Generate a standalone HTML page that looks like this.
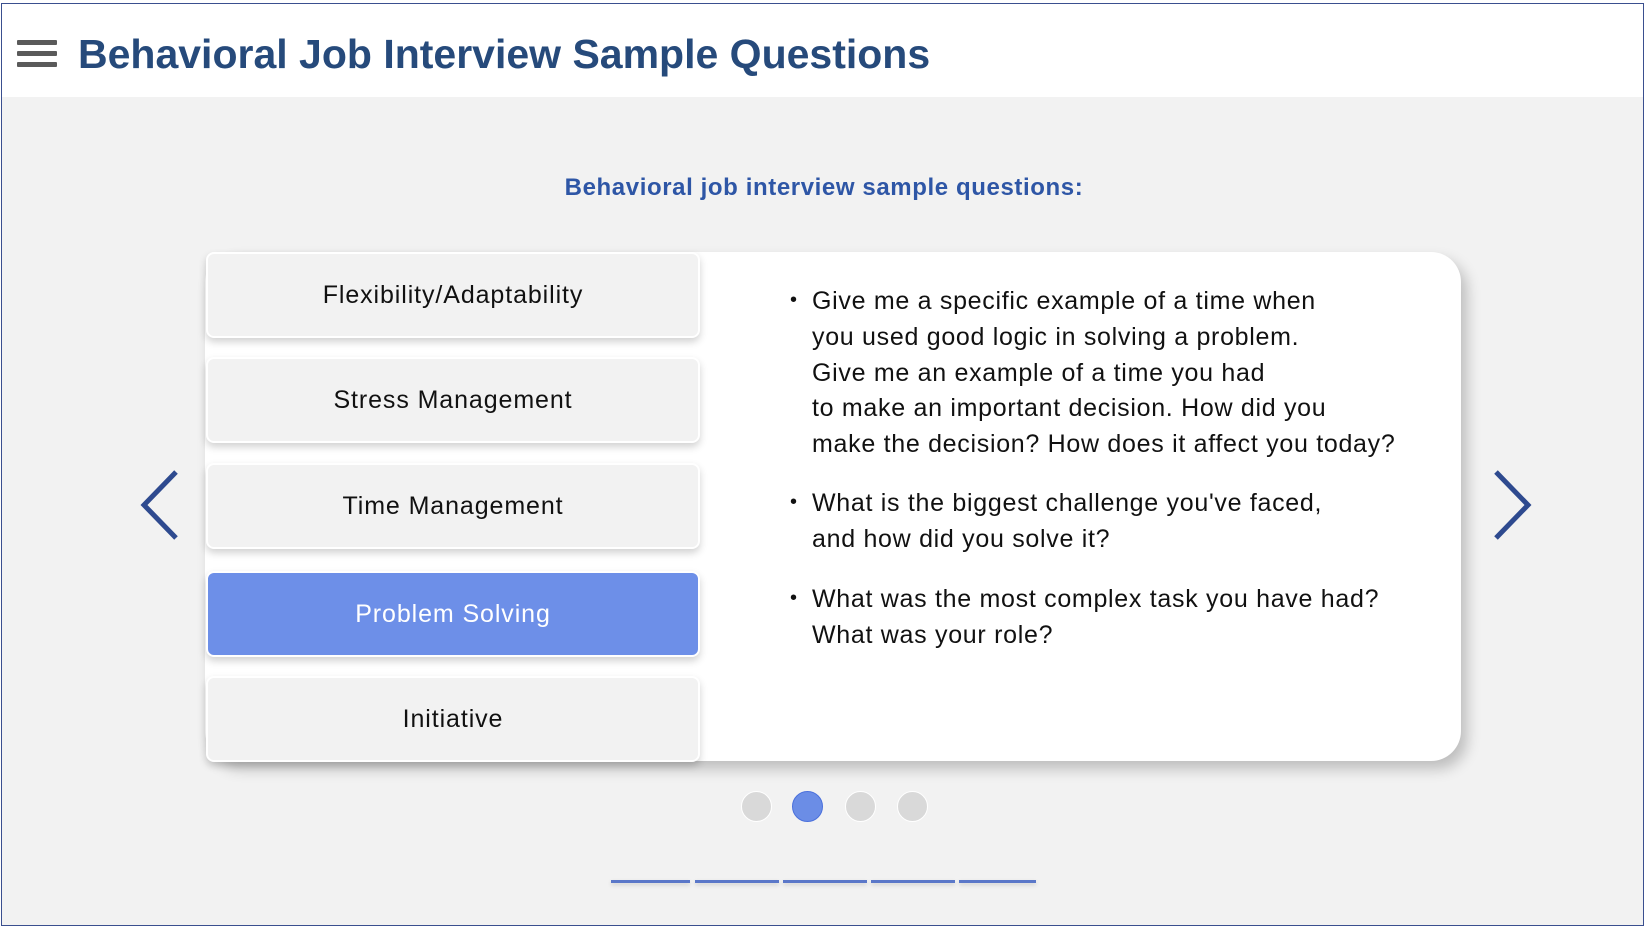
<!DOCTYPE html>
<html><head><meta charset="utf-8"><style>
*{margin:0;padding:0;box-sizing:border-box}
body{width:1648px;height:931px;background:#fff;position:relative;overflow:hidden;font-family:"Liberation Sans",sans-serif}
.frame{position:absolute;left:1px;top:3px;width:1643px;height:923px;border:1.5px solid #3a4f8f;background:#f2f2f2}
.header{position:absolute;left:0;top:0;right:0;height:93px;background:#fff}
.bar{position:absolute;left:15px;width:40px;height:5px;background:#5a5a5a;border-radius:1px}
.title{position:absolute;left:76px;top:27px;font-weight:bold;font-size:41px;letter-spacing:0;color:#264a7b;white-space:nowrap}
.sub{position:absolute;left:0;width:1648px;top:174px;text-align:center;font-weight:bold;font-size:24px;letter-spacing:0.6px;color:#2e56a6}
.card{position:absolute;left:205px;top:252px;width:1256px;height:509px;background:#fff;border-radius:30px;box-shadow:6px 8px 14px rgba(0,0,0,.22)}
.tab{position:absolute;left:206px;width:494px;height:86px;background:#f2f2f2;border:2px solid #fff;border-radius:8px;box-shadow:0 4px 8px rgba(0,0,0,.18);display:flex;align-items:center;justify-content:center;font-size:25px;letter-spacing:0.9px;color:#111}
.tab.on{background:#6d8fe8;color:#fff}
.txt{position:absolute;left:812px;font-size:25px;letter-spacing:0.7px;color:#111;line-height:35.8px;white-space:nowrap}
.bul{position:absolute;left:790px;font-size:20px;color:#111}
.dot{position:absolute;top:791px;width:31px;height:31px;border-radius:50%;background:#d9d9d9;border:1.5px solid #fff}
.seg{position:absolute;top:880px;height:3px;background:#5b78c9;box-shadow:0 2px 4px rgba(0,0,0,.15)}
</style></head><body>
<div class="frame">
<div class="header">
<div class="bar" style="top:36px"></div><div class="bar" style="top:47px"></div><div class="bar" style="top:58px"></div>
<div class="title">Behavioral Job Interview Sample Questions</div>
</div>
</div>
<div class="sub">Behavioral job interview sample questions:</div>
<div class="card"></div>
<div class="tab" style="top:252px">Flexibility/Adaptability</div>
<div class="tab" style="top:357px">Stress Management</div>
<div class="tab" style="top:463px">Time Management</div>
<div class="tab on" style="top:571px">Problem Solving</div>
<div class="tab" style="top:676px">Initiative</div>
<div class="bul" style="top:289px">•</div>
<div class="txt" style="top:284px">Give me a specific example of a time when<br>you used good logic in solving a problem.<br>Give me an example of a time you had<br>to make an important decision. How did you<br>make the decision? How does it affect you today?</div>
<div class="bul" style="top:491px">•</div>
<div class="txt" style="top:486px">What is the biggest challenge you've faced,<br>and how did you solve it?</div>
<div class="bul" style="top:587px">•</div>
<div class="txt" style="top:582px">What was the most complex task you have had?<br>What was your role?</div>
<svg style="position:absolute;left:136px;top:468px" width="48" height="74"><path d="M40 4 L8 37 L40 70" fill="none" stroke="#2e4a8f" stroke-width="5"/></svg>
<svg style="position:absolute;left:1488px;top:468px" width="48" height="74"><path d="M8 4 L40 37 L8 70" fill="none" stroke="#2e4a8f" stroke-width="5"/></svg>
<div class="dot" style="left:741px"></div>
<div class="dot" style="left:792px;background:#6b8de6;border-color:#4a70dc"></div>
<div class="dot" style="left:845px"></div>
<div class="dot" style="left:897px"></div>
<div class="seg" style="left:611px;width:79px"></div>
<div class="seg" style="left:695px;width:84px"></div>
<div class="seg" style="left:783px;width:84px"></div>
<div class="seg" style="left:871px;width:84px"></div>
<div class="seg" style="left:959px;width:77px"></div>
</body></html>
